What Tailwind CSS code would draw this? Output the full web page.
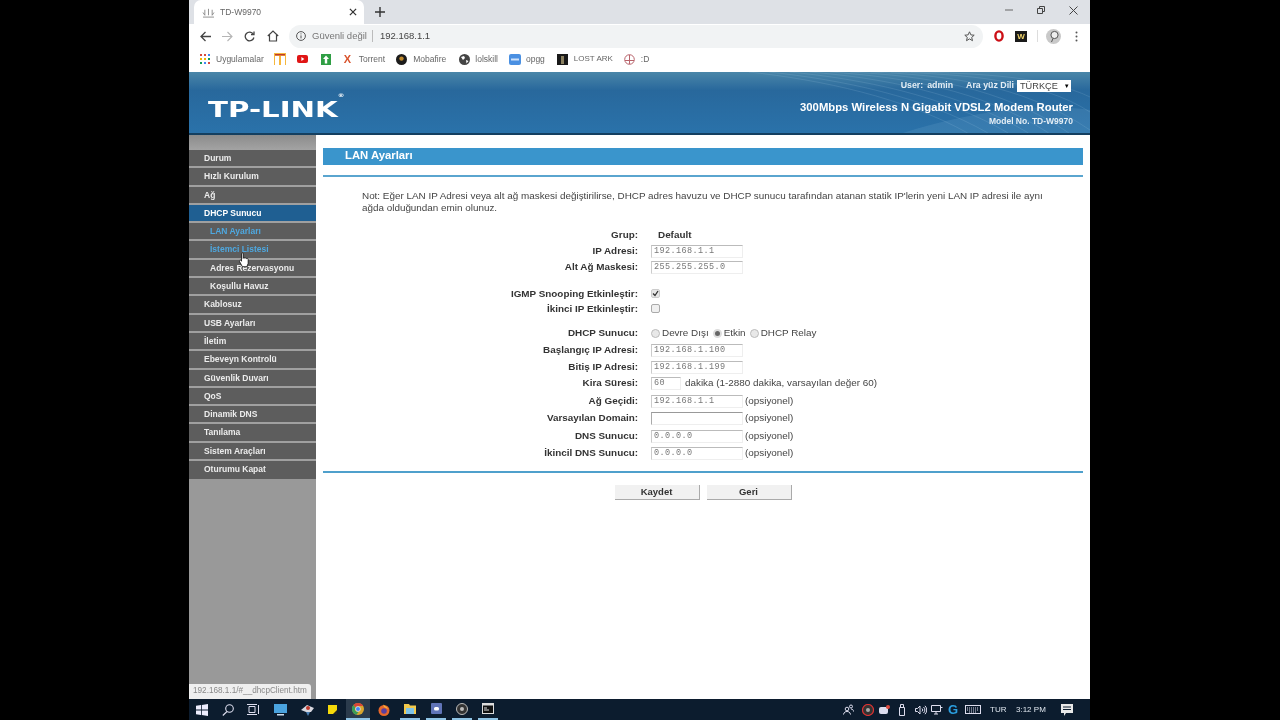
<!DOCTYPE html>
<html lang="en">
<head>
<meta charset="UTF-8">
<title>TD-W9970</title>
<script src="https://cdn.jsdelivr.net/npm/@tailwindcss/browser@4"></script>
</head>
<body class="bg-black">
<div class="w-[1280px] h-[720px] pl-[189px] overflow-hidden bg-black font-['Liberation_Sans',Arial,sans-serif]">
  <div class="relative w-[901px] h-[720px] flex flex-col bg-white blur-[0.35px]">

    <!-- tab strip -->
    <div class="h-[24px] bg-[#dee1e6] flex items-end shrink-0 pl-[5px]">
      <div class="w-[170px] h-[24px] bg-white rounded-t-[7px] flex items-center pl-[8px] pr-[7px]">
        <svg class="w-[13px] h-[11px]" viewBox="0 0 14 12" fill="none" stroke="#888" stroke-width="1"><path d="M1 11h12M3 9V3M7 9V2M11 9V3M3 9L1 6M11 9l2-3"/></svg>
        <span class="ml-[5px] text-[8.500px] text-[#666]">TD-W9970</span>
        <svg class="ml-auto w-[8px] h-[8px]" viewBox="0 0 9 9" stroke="#333" stroke-width="1.400"><path d="M1 1l7 7M8 1l-7 7"/></svg>
      </div>
      <svg class="ml-[11px] mb-[7px] w-[10px] h-[10px]" viewBox="0 0 10 10" stroke="#333" stroke-width="1.400"><path d="M5 0v10M0 5h10"/></svg>
      <div class="ml-auto h-[24px] flex items-center text-[#555]">
        <svg class="w-[8px] h-[8px] mr-[24px] mb-[4px]" viewBox="0 0 8 8" stroke="#666"><path d="M0 4h8"/></svg>
        <svg class="w-[8px] h-[8px] mr-[24px] mb-[4px]" viewBox="0 0 8 8" fill="none" stroke="#444"><path d="M.5 2.500h5v5h-5zM2.500 2.500v-2h5v5h-2"/></svg>
        <svg class="w-[9px] h-[9px] mr-[12px] mb-[4px]" viewBox="0 0 9 9" stroke="#444"><path d="M.5.5l8 8M8.500.5l-8 8"/></svg>
      </div>
    </div>

    <!-- toolbar -->
    <div class="h-[24px] bg-white flex items-center shrink-0 pl-[11px]">
      <svg class="w-[11px] h-[11px]" viewBox="0 0 11 11" fill="none" stroke="#444" stroke-width="1.300"><path d="M11 5.500H1M5.500 1L1 5.500 5.500 10"/></svg>
      <svg class="ml-[11px] w-[11px] h-[11px]" viewBox="0 0 11 11" fill="none" stroke="#b5b5b5" stroke-width="1.100"><path d="M0 5.500h10M5.500 1L10 5.500 5.500 10"/></svg>
      <svg class="ml-[11px] w-[11px] h-[11px]" viewBox="0 0 11 11" fill="none" stroke="#444" stroke-width="1.300"><path d="M9.300 3A4.400 4.400 0 1 0 9.900 6.500"/><path d="M10 .5v3H7"/></svg>
      <svg class="ml-[12px] w-[12px] h-[12px]" viewBox="0 0 12 12" fill="none" stroke="#444" stroke-width="1.200"><path d="M.8 6L6 1l5.200 5M2.500 5v6h7V5"/></svg>
      <div class="ml-[10px] w-[694px] h-[23px] rounded-full bg-[#f1f3f4] flex items-center pl-[7px] pr-[8px]">
        <svg class="w-[10px] h-[10px]" viewBox="0 0 10 10" fill="none" stroke="#555"><circle cx="5" cy="5" r="4.400"/><path d="M5 4.400v3M5 2.400v1"/></svg>
        <span class="ml-[6px] text-[9.500px] text-[#777]">Güvenli değil</span>
        <span class="ml-[5px] w-px h-[12px] bg-[#bbb]"></span>
        <span class="ml-[7px] text-[9.500px] text-[#444]">192.168.1.1</span>
        <svg class="ml-auto w-[11px] h-[11px]" viewBox="0 0 11 11" fill="none" stroke="#555"><path d="M5.500.8l1.400 3.100 3.300.3-2.500 2.200.8 3.300-3-1.800-3 1.800.8-3.300L.8 4.200l3.300-.3z"/></svg>
      </div>
      <svg class="ml-[10px] w-[12px] h-[12px]" viewBox="0 0 12 12" fill="none" stroke="#cc0f16" stroke-width="2.400"><ellipse cx="6" cy="6" rx="3.600" ry="4.600"/></svg>
      <div class="ml-[10px] w-[12px] h-[11px] bg-[#1a1a1a] text-[#f1d46a] text-[8px] font-bold leading-[11px] text-center">W</div>
      <span class="ml-[10px] w-px h-[12px] bg-[#ddd]"></span>
      <svg class="ml-[8px] w-[15px] h-[15px]" viewBox="0 0 15 15"><circle cx="7.500" cy="7.500" r="7.500" fill="#c9c9c9"/><circle cx="8.500" cy="6" r="3.600" fill="#eee" stroke="#555"/><path d="M7 9.500L5.500 13" stroke="#555"/></svg>
      <svg class="ml-[14px] w-[3px] h-[11px]" viewBox="0 0 3 11" fill="#555"><circle cx="1.500" cy="1.500" r="1"/><circle cx="1.500" cy="5.500" r="1"/><circle cx="1.500" cy="9.500" r="1"/></svg>
    </div>

    <!-- bookmarks -->
    <div class="h-[24px] bg-white flex items-center shrink-0 pl-[11px] pb-[2px] text-[8.500px] text-[#666]">
      <svg class="w-[10px] h-[10px]" viewBox="0 0 10 10"><g fill="#d9483b"><rect width="2" height="2"/><rect x="4" width="2" height="2"/></g><rect x="8" width="2" height="2" fill="#4285f4"/><g fill="#f4b400"><rect y="4" width="2" height="2"/><rect x="4" y="4" width="2" height="2"/></g><rect x="8" y="4" width="2" height="2" fill="#0f9d58"/><g fill="#0f9d58"><rect y="8" width="2" height="2"/></g><rect x="4" y="8" width="2" height="2" fill="#4285f4"/><rect x="8" y="8" width="2" height="2" fill="#d9483b"/></svg>
      <span class="ml-[6px]">Uygulamalar</span>
      <svg class="ml-[10px] w-[12px] h-[12px]" viewBox="0 0 12 12"><rect width="12" height="12" fill="#f6b73c"/><rect x="1" y="3" width="4" height="9" fill="#fff"/><rect x="7" y="3" width="4" height="9" fill="#fff"/><rect x="1" y="1" width="10" height="1.400" fill="#c0392b"/></svg>
      <svg class="ml-[11px] w-[11px] h-[8px]" viewBox="0 0 11 8"><rect width="11" height="8" rx="2" fill="#e01515"/><path d="M4.400 2v4l3-2z" fill="#fff"/></svg>
      <svg class="ml-[13px] w-[10px] h-[11px]" viewBox="0 0 10 11"><rect width="10" height="11" fill="#2f9e44"/><path d="M5 1.500L8 5H6.200v4.500H3.800V5H2z" fill="#fff"/></svg>
      <span class="ml-[13px] w-[8px] text-[11px] leading-none font-bold text-[#d9532c]">X</span>
      <span class="ml-[7px]">Torrent</span>
      <svg class="ml-[11px] w-[11px] h-[11px]" viewBox="0 0 11 11"><circle cx="5.500" cy="5.500" r="5.500" fill="#1c1c1c"/><circle cx="5.500" cy="4.600" r="2.200" fill="#c08a2d"/></svg>
      <span class="ml-[6px]">Mobafire</span>
      <svg class="ml-[13px] w-[11px] h-[11px]" viewBox="0 0 11 11"><circle cx="5.500" cy="5.500" r="5.500" fill="#444"/><path d="M2 3l3-1 1 2-2 2zM7 6l2.500 1-2 2.500z" fill="#fff"/></svg>
      <span class="ml-[5px]">lolskill</span>
      <svg class="ml-[11px] w-[12px] h-[11px]" viewBox="0 0 12 11"><rect width="12" height="11" rx="2" fill="#4a90e2"/><rect x="2" y="4.500" width="8" height="2" fill="#cfe2f9"/></svg>
      <span class="ml-[5px]">opgg</span>
      <svg class="ml-[12px] w-[11px] h-[11px]" viewBox="0 0 11 11"><rect width="11" height="11" fill="#1a1a1a"/><rect x="4" y="2" width="3" height="8" fill="#8a8060"/></svg>
      <span class="ml-[6px] text-[8px]">LOST ARK</span>
      <svg class="ml-[11px] w-[11px] h-[11px]" viewBox="0 0 11 11" fill="none" stroke="#b8636b"><circle cx="5.500" cy="5.500" r="4.800"/><path d="M5.500 1v9M1 6.500h9"/></svg>
      <span class="ml-[6px]">:D</span>
    </div>

    <!-- router header -->
    <div class="relative h-[63px] shrink-0 bg-gradient-to-b from-[#4a86a8] via-[#28689c] via-30% to-[#2a72aa] border-b-[2px] border-[#143f60] overflow-hidden">
      <svg class="absolute left-[560px] top-0 w-[341px] h-[61px]" viewBox="0 0 421 61" preserveAspectRatio="none" fill="none" stroke="#a9cfe6" stroke-opacity=".26" stroke-width=".7">
        <path d="M190 61C270 40 360 30 421 38V61z" fill="#bfe0f2" fill-opacity=".1" stroke="none"/>
        <path d="M0 0C90 8 190 25 270 61M25 0C115 8 215 24 295 61M50 0C140 7 240 23 320 61M75 0C165 6 260 20 345 61M100 0C190 5 285 17 370 61M125 0C215 4 310 14 395 61M150 0C240 3 335 11 421 58M175 0C265 2 360 8 421 40M200 0C285 1 370 5 421 25"/>
      </svg>
      <div class="absolute left-[19px] top-[25px] text-white text-[22px] leading-[25px] font-bold font-['DejaVu_Sans',sans-serif] scale-x-[1.33] origin-left whitespace-nowrap">TP-LINK<sup class="text-[5px] align-top">®</sup></div>
      <div class="relative flex flex-col items-end pr-[17px] text-white font-bold">
        <div class="h-[28px] flex items-center text-[8.800px] text-[#e4eef5] pr-[2px]">
          <span>User:</span><span class="ml-[4px]">admin</span><span class="ml-[13px]">Ara yüz Dili</span>
          <span class="ml-[3px] w-[54px] h-[12px] bg-white text-[#444] font-normal text-[9.200px] leading-[12px] pl-[3px] flex items-center">TÜRKÇE<span class="ml-[6px] text-[6px] text-black">▼</span></span>
        </div>
        <div class="text-[11.300px] leading-[14px]">300Mbps Wireless N Gigabit VDSL2 Modem Router</div>
        <div class="text-[8.500px] leading-[10px] mt-[2px] text-[#e4eef5]">Model No. TD-W9970</div>
      </div>
    </div>

    <!-- body -->
    <div class="flex flex-1 min-h-0">
      <!-- sidebar -->
      <div class="w-[127px] shrink-0 bg-[#999999] text-[8.500px] font-bold text-[#ececec]">
        <div class="h-[15px] bg-gradient-to-b from-[#8c8c8c] to-[#a3a3a3]"></div>
        <div class="h-[18.300px] bg-[#5d5d5d] border-b-2 border-[#a0a0a0] pl-[15px] leading-[16px]">Durum</div>
        <div class="h-[18.300px] bg-[#5d5d5d] border-b-2 border-[#a0a0a0] pl-[15px] leading-[16px]">Hızlı Kurulum</div>
        <div class="h-[18.300px] bg-[#5d5d5d] border-b-2 border-[#a0a0a0] pl-[15px] leading-[16px]">Ağ</div>
        <div class="h-[18.300px] bg-[#1f5f92] border-b-2 border-[#a0a0a0] pl-[15px] leading-[16px] text-white">DHCP Sunucu</div>
        <div class="h-[18.300px] bg-[#5d5d5d] border-b-2 border-[#a0a0a0] pl-[21px] leading-[16px] text-[#4ea8e0]">LAN Ayarları</div>
        <div class="h-[18.300px] bg-[#5d5d5d] border-b-2 border-[#a0a0a0] pl-[21px] leading-[16px] text-[#4ea8e0]">İstemci Listesi</div>
        <div class="h-[18.300px] bg-[#5d5d5d] border-b-2 border-[#a0a0a0] pl-[21px] leading-[16px]">Adres Rezervasyonu</div>
        <div class="h-[18.300px] bg-[#5d5d5d] border-b-2 border-[#a0a0a0] pl-[21px] leading-[16px]">Koşullu Havuz</div>
        <div class="h-[18.300px] bg-[#5d5d5d] border-b-2 border-[#a0a0a0] pl-[15px] leading-[16px]">Kablosuz</div>
        <div class="h-[18.300px] bg-[#5d5d5d] border-b-2 border-[#a0a0a0] pl-[15px] leading-[16px]">USB Ayarları</div>
        <div class="h-[18.300px] bg-[#5d5d5d] border-b-2 border-[#a0a0a0] pl-[15px] leading-[16px]">İletim</div>
        <div class="h-[18.300px] bg-[#5d5d5d] border-b-2 border-[#a0a0a0] pl-[15px] leading-[16px]">Ebeveyn Kontrolü</div>
        <div class="h-[18.300px] bg-[#5d5d5d] border-b-2 border-[#a0a0a0] pl-[15px] leading-[16px]">Güvenlik Duvarı</div>
        <div class="h-[18.300px] bg-[#5d5d5d] border-b-2 border-[#a0a0a0] pl-[15px] leading-[16px]">QoS</div>
        <div class="h-[18.300px] bg-[#5d5d5d] border-b-2 border-[#a0a0a0] pl-[15px] leading-[16px]">Dinamik DNS</div>
        <div class="h-[18.300px] bg-[#5d5d5d] border-b-2 border-[#a0a0a0] pl-[15px] leading-[16px]">Tanılama</div>
        <div class="h-[18.300px] bg-[#5d5d5d] border-b-2 border-[#a0a0a0] pl-[15px] leading-[16px]">Sistem Araçları</div>
        <div class="h-[17.500px] bg-[#5d5d5d] pl-[15px] leading-[16px]">Oturumu Kapat</div>
      </div>

      <!-- main -->
      <div class="flex-1 pl-[7px] pr-[7px] pt-[13px] text-[9.900px] text-[#444]">
        <div class="h-[17px] bg-[#3a95cc] text-white font-bold text-[11.300px] leading-[14px] pl-[22px]">LAN Ayarları</div>
        <div class="mt-[10px] h-[2px] bg-[#5aa5cf]"></div>
        <p class="mt-[13px] ml-[39px] w-[690px] leading-[12px]">Not: Eğer LAN IP Adresi veya alt ağ maskesi değiştirilirse, DHCP adres havuzu ve DHCP sunucu tarafından atanan statik IP'lerin yeni LAN IP adresi ile aynı ağda olduğundan emin olunuz.</p>

        <div class="mt-[13px]">
          <div class="flex items-center h-[16px]"><b class="w-[315px] text-right text-[#333]">Grup:</b><b class="ml-[20px] text-[#333]">Default</b></div>
          <div class="flex items-center h-[16px]"><b class="w-[315px] text-right text-[#333]">IP Adresi:</b><span class="ml-[13px] w-[92px] h-[13px] border border-[#eeeeee] border-t-[#bbb] border-l-[#ccc] pl-[2px] leading-[11px] font-['Liberation_Mono',monospace] text-[8.500px] tracking-[0.4px] text-[#777]">192.168.1.1</span></div>
          <div class="flex items-center h-[16px]"><b class="w-[315px] text-right text-[#333]">Alt Ağ Maskesi:</b><span class="ml-[13px] w-[92px] h-[13px] border border-[#eeeeee] border-t-[#bbb] border-l-[#ccc] pl-[2px] leading-[11px] font-['Liberation_Mono',monospace] text-[8.500px] tracking-[0.4px] text-[#777]">255.255.255.0</span></div>

          <div class="flex items-center h-[15px] mt-[12px]"><b class="w-[315px] text-right text-[#333]">IGMP Snooping Etkinleştir:</b>
            <svg class="ml-[13px] -mt-[3px] w-[9px] h-[9px]" viewBox="0 0 9 9"><rect x=".5" y=".5" width="8" height="8" rx="1.500" fill="#e6e6e6" stroke="#ccc"/><path d="M2 4.500l2 2L7 2" fill="none" stroke="#333" stroke-width="1.300"/></svg></div>
          <div class="flex items-center h-[15px]"><b class="w-[315px] text-right text-[#333]">İkinci IP Etkinleştir:</b>
            <svg class="ml-[13px] -mt-[3px] w-[9px] h-[9px]" viewBox="0 0 9 9"><rect x=".5" y=".5" width="8" height="8" rx="1.500" fill="#f0f0f0" stroke="#aaa"/></svg></div>

          <div class="flex items-center h-[17px] mt-[8px]"><b class="w-[315px] text-right text-[#333]">DHCP Sunucu:</b>
            <span class="ml-[13px] w-[9px] h-[9px] rounded-full border border-[#bbb] bg-[#e8e8e8]"></span><span class="ml-[2px]">Devre Dışı</span>
            <span class="ml-[4px] w-[9px] h-[9px] rounded-full border-[2.500px] border-[#ddd] bg-[#666]"></span><span class="ml-[2px]">Etkin</span>
            <span class="ml-[4px] w-[9px] h-[9px] rounded-full border border-[#bbb] bg-[#e8e8e8]"></span><span class="ml-[2px]">DHCP Relay</span></div>
          <div class="flex items-center h-[17px]"><b class="w-[315px] text-right text-[#333]">Başlangıç IP Adresi:</b><span class="ml-[13px] w-[92px] h-[13px] border border-[#eeeeee] border-t-[#bbb] border-l-[#ccc] pl-[2px] leading-[11px] font-['Liberation_Mono',monospace] text-[8.500px] tracking-[0.4px] text-[#777]">192.168.1.100</span></div>
          <div class="flex items-center h-[16px]"><b class="w-[315px] text-right text-[#333]">Bitiş IP Adresi:</b><span class="ml-[13px] w-[92px] h-[13px] border border-[#eeeeee] border-t-[#bbb] border-l-[#ccc] pl-[2px] leading-[11px] font-['Liberation_Mono',monospace] text-[8.500px] tracking-[0.4px] text-[#777]">192.168.1.199</span></div>
          <div class="flex items-center h-[17px]"><b class="w-[315px] text-right text-[#333]">Kira Süresi:</b><span class="ml-[13px] w-[30px] h-[13px] border border-[#eeeeee] border-t-[#bbb] border-l-[#ccc] pl-[2px] leading-[11px] font-['Liberation_Mono',monospace] text-[8.500px] tracking-[0.4px] text-[#777]">60</span><span class="ml-[4px]">dakika (1-2880 dakika, varsayılan değer 60)</span></div>
          <div class="flex items-center h-[18px]"><b class="w-[315px] text-right text-[#333]">Ağ Geçidi:</b><span class="ml-[13px] w-[92px] h-[13px] border border-[#eeeeee] border-t-[#bbb] border-l-[#ccc] pl-[2px] leading-[11px] font-['Liberation_Mono',monospace] text-[8.500px] tracking-[0.4px] text-[#777]">192.168.1.1</span><span class="ml-[2px]">(opsiyonel)</span></div>
          <div class="flex items-center h-[17px]"><b class="w-[315px] text-right text-[#333]">Varsayılan Domain:</b><span class="ml-[13px] w-[92px] h-[13px] border border-[#eeeeee] border-t-[#999] border-l-[#aaa]"></span><span class="ml-[2px]">(opsiyonel)</span></div>
          <div class="flex items-center h-[18px]"><b class="w-[315px] text-right text-[#333]">DNS Sunucu:</b><span class="ml-[13px] w-[92px] h-[13px] border border-[#eeeeee] border-t-[#bbb] border-l-[#ccc] pl-[2px] leading-[11px] font-['Liberation_Mono',monospace] text-[8.500px] tracking-[0.4px] text-[#777]">0.0.0.0</span><span class="ml-[2px]">(opsiyonel)</span></div>
          <div class="flex items-center h-[17px]"><b class="w-[315px] text-right text-[#333]">İkincil DNS Sunucu:</b><span class="ml-[13px] w-[92px] h-[13px] border border-[#eeeeee] border-t-[#bbb] border-l-[#ccc] pl-[2px] leading-[11px] font-['Liberation_Mono',monospace] text-[8.500px] tracking-[0.4px] text-[#777]">0.0.0.0</span><span class="ml-[2px]">(opsiyonel)</span></div>
        </div>

        <div class="mt-[9px] h-[2px] bg-[#4fa0cc]"></div>
        <div class="mt-[12px] flex justify-center gap-[7px]">
          <div class="w-[85px] h-[15px] bg-[#f1f1f1] border-b border-r border-[#aaa] text-center font-bold text-[9.500px] leading-[14px] text-[#333]">Kaydet</div>
          <div class="w-[85px] h-[15px] bg-[#f1f1f1] border-b border-r border-[#aaa] text-center font-bold text-[9.500px] leading-[14px] text-[#333]">Geri</div>
        </div>
      </div>
    </div>

    <!-- taskbar -->
    <div class="h-[21px] bg-[#0c1c2e] shrink-0 flex items-center text-white">
      <svg class="ml-[7px] w-[12px] h-[12px]" viewBox="0 0 12 12" fill="#eef"><path d="M0 1.800l5-.7v4.500H0zM5.800 1l6.200-1v5.600H5.800zM0 6.400h5v4.500l-5-.7zM5.800 6.400H12V12l-6.200-1z"/></svg>
      <svg class="ml-[14px] w-[12px] h-[12px]" viewBox="0 0 12 12" fill="none" stroke="#dde" stroke-width="1.100"><circle cx="7.500" cy="4.500" r="3.800"/><path d="M5 7.500L.8 11.500"/></svg>
      <svg class="ml-[13px] w-[12px] h-[11px]" viewBox="0 0 12 11" fill="none" stroke="#dde"><path d="M2 2.500h6v6H2zM0 .5h10M0 10.500h10M11.500 1v9"/></svg>
      <svg class="ml-[15px] w-[13px] h-[12px]" viewBox="0 0 13 12"><rect width="13" height="9" fill="#4aa3df"/><rect x="3" y="10" width="7" height="1.500" fill="#cde"/></svg>
      <svg class="ml-[14px] w-[13px] h-[12px]" viewBox="0 0 13 12"><path d="M0 6l6-5 7 3-3 4H5z" fill="#d8d8e0"/><circle cx="7" cy="4" r="2" fill="#c0392b"/><path d="M5 8l2 4 2-4" fill="#4a7fb5"/></svg>
      <svg class="ml-[14px] w-[9px] h-[9px]" viewBox="0 0 9 9"><rect width="9" height="9" fill="#f5d90a"/><path d="M5 9l4-4v4z" fill="#222"/></svg>
      <div class="ml-[9px] w-[24px] h-[21px] bg-[#2b3b4c] border-b-2 border-[#8fc4e6] flex items-center justify-center">
        <svg class="w-[12px] h-[12px]" viewBox="0 0 12 12"><circle cx="6" cy="6" r="6" fill="#d9a62e"/><path d="M6 0a6 6 0 0 1 5.200 3H6a3 3 0 0 0-2.700 1.600L1.400 2A6 6 0 0 1 6 0z" fill="#d94436"/><path d="M1.400 2a6 6 0 0 0 3 9.800L6.500 9A3 3 0 0 1 3.300 4.600z" fill="#3a9d58"/><circle cx="6" cy="6" r="2.400" fill="#4285f4" stroke="#fff" stroke-width=".6"/></svg>
      </div>
      <div class="ml-[7px] w-[14px] h-[21px] flex items-center justify-center">
        <svg class="w-[12px] h-[12px]" viewBox="0 0 12 12"><circle cx="6" cy="6.500" r="5.500" fill="#e8672a"/><circle cx="6" cy="7" r="2.800" fill="#5a3fa0"/><path d="M5 0c1 2 4 2 5 5L6 3z" fill="#f6b73c"/></svg>
      </div>
      <div class="ml-[9px] w-[20px] h-[21px] flex items-center justify-center border-b-2 border-[#8fc4e6]">
        <svg class="w-[12px] h-[11px]" viewBox="0 0 12 11"><path d="M0 1h5l1 1.500h6V11H0z" fill="#f2c94c"/><rect x="2" y="5" width="8" height="6" fill="#7fc4e8"/></svg>
      </div>
      <div class="ml-[6px] w-[20px] h-[21px] flex items-center justify-center border-b-2 border-[#8fc4e6]">
        <svg class="w-[11px] h-[11px]" viewBox="0 0 11 11"><rect width="11" height="11" rx="1" fill="#6074b8"/><rect x="3" y="4" width="5" height="3.500" rx="1.500" fill="#fff"/></svg>
      </div>
      <div class="ml-[6px] w-[20px] h-[21px] flex items-center justify-center border-b-2 border-[#8fc4e6]">
        <svg class="w-[12px] h-[12px]" viewBox="0 0 12 12"><circle cx="6" cy="6" r="5.500" fill="#333" stroke="#bbb"/><circle cx="6" cy="6" r="2" fill="#bbb"/></svg>
      </div>
      <div class="ml-[6px] w-[20px] h-[21px] flex items-center justify-center border-b-2 border-[#8fc4e6]">
        <svg class="w-[12px] h-[11px]" viewBox="0 0 12 11"><rect width="12" height="11" fill="#ddd"/><rect x="1" y="2.500" width="10" height="7.500" fill="#111"/><path d="M2 5h3M2 7h5" stroke="#ddd"/></svg>
      </div>

      <div class="ml-auto flex items-center text-[8px] text-[#dfe6ee]">
        <svg class="w-[11px] h-[11px]" viewBox="0 0 11 11" fill="none" stroke="#dde"><circle cx="4" cy="5" r="1.800"/><path d="M.5 10.500C1 8 2.500 7.500 4 7.500S7 8 7.500 10.500"/><circle cx="8" cy="2.500" r="1.500"/><path d="M8 5c1.500 0 2.500 1 2.500 2.500"/></svg>
        <svg class="ml-[8px] w-[12px] h-[12px]" viewBox="0 0 12 12"><circle cx="6" cy="6" r="5.500" fill="#333" stroke="#d33" stroke-width="1.200"/><circle cx="6" cy="6" r="2" fill="#aaa"/></svg>
        <svg class="ml-[5px] w-[11px] h-[9px]" viewBox="0 0 11 9"><rect y="2" width="9" height="7" rx="2" fill="#dde"/><circle cx="9" cy="2" r="2" fill="#e04b3f"/></svg>
        <svg class="ml-[8px] w-[8px] h-[12px]" viewBox="0 0 8 12" fill="none" stroke="#dde"><path d="M1.500 3.500h5v8h-5zM2.500 3.500V.5h3v3"/></svg>
        <svg class="ml-[9px] w-[12px] h-[10px]" viewBox="0 0 12 10" fill="none" stroke="#dde"><path d="M.5 3.500h2L5 1v8L2.500 6.500h-2zM7 3.500a2 2 0 0 1 0 3M8.500 2a4 4 0 0 1 0 6M10 .8a6 6 0 0 1 0 8.400"/></svg>
        <svg class="ml-[4px] w-[12px] h-[11px]" viewBox="0 0 12 11" fill="none" stroke="#dde"><path d="M.5 1.500h9v6h-9zM3 10h4M5 7.500V10"/><path d="M9 3.500h2.500"/></svg>
        <span class="ml-[5px] w-[10px] text-[13px] leading-none font-bold text-[#2b9fe0]">G</span>
        <svg class="ml-[7px] w-[16px] h-[9px]" viewBox="0 0 16 9" fill="none" stroke="#dde"><rect x=".5" y=".5" width="15" height="8"/><path d="M2 3h12M2 5h12M4 7h8" stroke-dasharray="1 1"/></svg>
        <span class="ml-[9px] w-[15px]">TUR</span>
        <span class="ml-[11px] w-[30px]">3:12 PM</span>
        <svg class="ml-[15px] mr-[17px] w-[12px] h-[12px]" viewBox="0 0 12 12"><path d="M0 0h12v9H5l-2 3V9H0z" fill="#e8e8e8"/><path d="M2 3h8M2 5.500h8" stroke="#0c1c2e"/></svg>
      </div>
    </div>

    <!-- status bubble -->
    <div class="absolute left-0 bottom-[21px] w-[122px] h-[15px] bg-[#efefef] rounded-tr-[3px] pl-[4px] text-[8.200px] leading-[14px] text-[#888]">192.168.1.1/#__dhcpClient.htm</div>
    <!-- mouse pointer -->
    <svg class="absolute left-[50px] top-[252px] w-[10px] h-[16px]" viewBox="0 0 12 18"><path d="M3 1.500c0-1.500 2-1.500 2 0V7c.5-1 2-1 2 0 .5-.8 2-.8 2 .4.500-.6 2-.4 2 .8V13l-1.500 4H4L.5 10.500c-.5-1 1-2 2-1L3 10.500z" fill="#fff" stroke="#000" stroke-width=".9"/></svg>
  </div>
</div>
</body>
</html>
